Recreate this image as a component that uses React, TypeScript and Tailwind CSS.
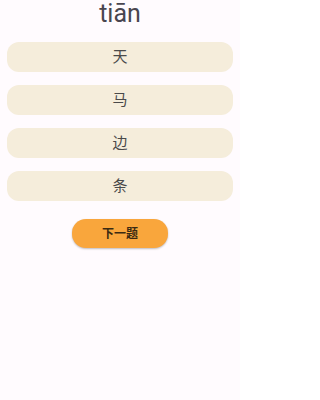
const options = ["天", "马", "边", "条"];

export default function App() {
  return (
    <div
      className="min-h-[400px] w-[240px] bg-[#fffbfe] flex flex-col items-center"
      style={{ fontFamily: 'Roboto, "Noto Sans CJK SC", sans-serif' }}
    >
      <h1 className="text-[25px] leading-[28px] text-[#49454f] font-normal">tiān</h1>

      <div className="w-full px-[7px] mt-[14px] flex flex-col gap-[13px]">
        {options.map((o) => (
          <button
            key={o}
            className="h-[30px] w-full rounded-[12px] bg-[#f5eddb] text-[15px] text-[#4a4a4a] flex items-center justify-center"
          >
            {o}
          </button>
        ))}
      </div>

      <button className="mt-[18px] w-[96px] h-[29px] rounded-[14px] bg-[#f9a63c] shadow-[0_1px_2px_rgba(0,0,0,0.25)] text-[12px] font-bold text-[#3b2a12] flex items-center justify-center">
        下一题
      </button>
    </div>
  );
}
